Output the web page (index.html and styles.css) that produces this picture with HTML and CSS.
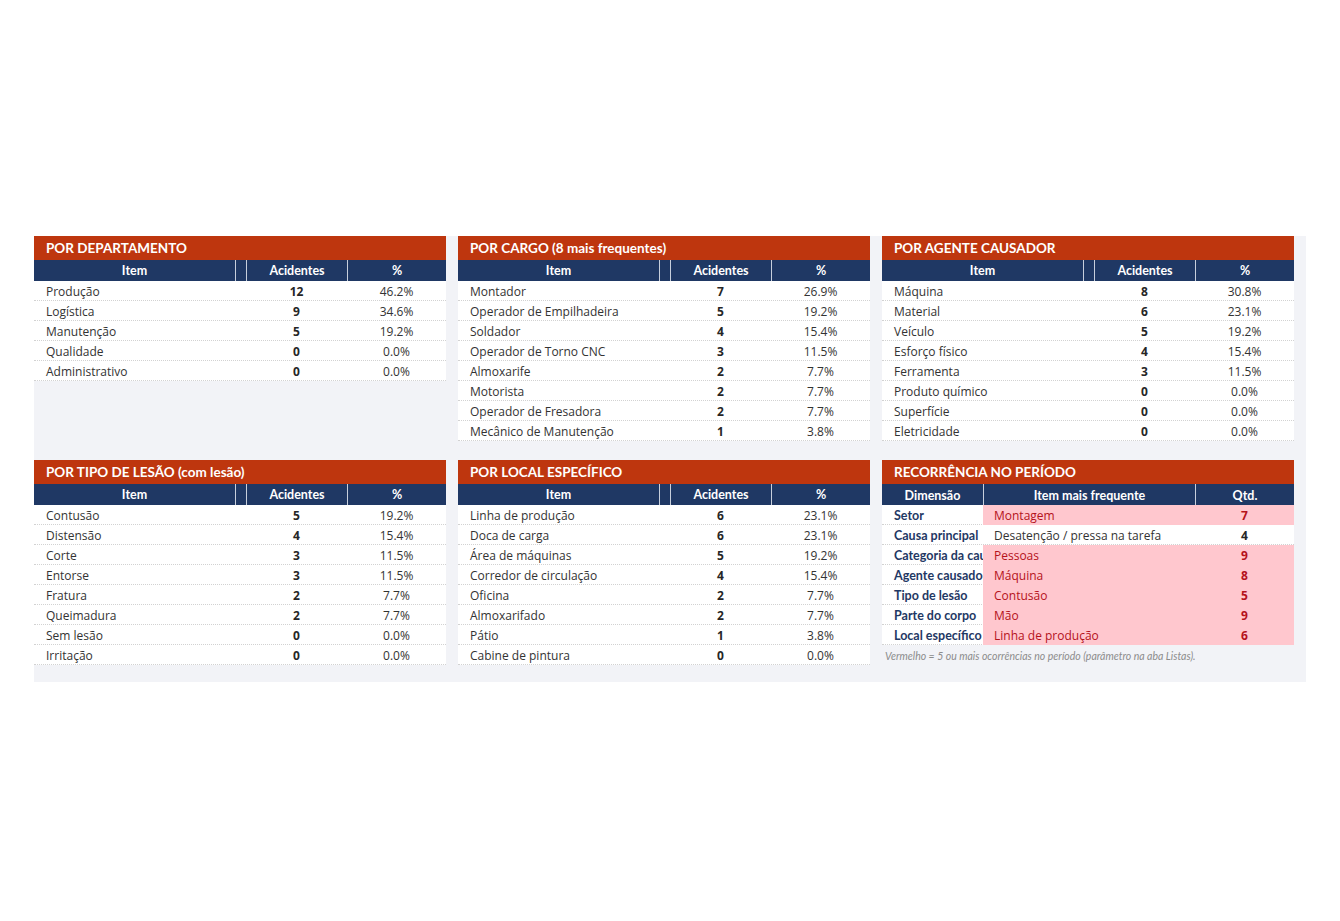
FILE: index.html
```html
<!DOCTYPE html>
<html lang="pt">
<head>
<meta charset="utf-8">
<title>Acidentes</title>
<link rel="stylesheet" href="styles.css">
</head>
<body>
<div class="sheet">
  <section class="panel">
    <div class="title">POR DEPARTAMENTO</div>
    <div class="row head"><span>Item</span><span></span><span>Acidentes</span><span>%</span></div>
    <div class="row"><span class="item">Produção</span><span></span><span class="num">12</span><span class="pct">46.2%</span></div>
    <div class="row"><span class="item">Logística</span><span></span><span class="num">9</span><span class="pct">34.6%</span></div>
    <div class="row"><span class="item">Manutenção</span><span></span><span class="num">5</span><span class="pct">19.2%</span></div>
    <div class="row"><span class="item">Qualidade</span><span></span><span class="num">0</span><span class="pct">0.0%</span></div>
    <div class="row"><span class="item">Administrativo</span><span></span><span class="num">0</span><span class="pct">0.0%</span></div>
  </section>

  <section class="panel">
    <div class="title">POR CARGO (8 mais frequentes)</div>
    <div class="row head"><span>Item</span><span></span><span>Acidentes</span><span>%</span></div>
    <div class="row"><span class="item">Montador</span><span></span><span class="num">7</span><span class="pct">26.9%</span></div>
    <div class="row"><span class="item">Operador de Empilhadeira</span><span></span><span class="num">5</span><span class="pct">19.2%</span></div>
    <div class="row"><span class="item">Soldador</span><span></span><span class="num">4</span><span class="pct">15.4%</span></div>
    <div class="row"><span class="item">Operador de Torno CNC</span><span></span><span class="num">3</span><span class="pct">11.5%</span></div>
    <div class="row"><span class="item">Almoxarife</span><span></span><span class="num">2</span><span class="pct">7.7%</span></div>
    <div class="row"><span class="item">Motorista</span><span></span><span class="num">2</span><span class="pct">7.7%</span></div>
    <div class="row"><span class="item">Operador de Fresadora</span><span></span><span class="num">2</span><span class="pct">7.7%</span></div>
    <div class="row"><span class="item">Mecânico de Manutenção</span><span></span><span class="num">1</span><span class="pct">3.8%</span></div>
  </section>

  <section class="panel">
    <div class="title">POR AGENTE CAUSADOR</div>
    <div class="row head"><span>Item</span><span></span><span>Acidentes</span><span>%</span></div>
    <div class="row"><span class="item">Máquina</span><span></span><span class="num">8</span><span class="pct">30.8%</span></div>
    <div class="row"><span class="item">Material</span><span></span><span class="num">6</span><span class="pct">23.1%</span></div>
    <div class="row"><span class="item">Veículo</span><span></span><span class="num">5</span><span class="pct">19.2%</span></div>
    <div class="row"><span class="item">Esforço físico</span><span></span><span class="num">4</span><span class="pct">15.4%</span></div>
    <div class="row"><span class="item">Ferramenta</span><span></span><span class="num">3</span><span class="pct">11.5%</span></div>
    <div class="row"><span class="item">Produto químico</span><span></span><span class="num">0</span><span class="pct">0.0%</span></div>
    <div class="row"><span class="item">Superfície</span><span></span><span class="num">0</span><span class="pct">0.0%</span></div>
    <div class="row"><span class="item">Eletricidade</span><span></span><span class="num">0</span><span class="pct">0.0%</span></div>
  </section>

  <section class="panel">
    <div class="title">POR TIPO DE LESÃO (com lesão)</div>
    <div class="row head"><span>Item</span><span></span><span>Acidentes</span><span>%</span></div>
    <div class="row"><span class="item">Contusão</span><span></span><span class="num">5</span><span class="pct">19.2%</span></div>
    <div class="row"><span class="item">Distensão</span><span></span><span class="num">4</span><span class="pct">15.4%</span></div>
    <div class="row"><span class="item">Corte</span><span></span><span class="num">3</span><span class="pct">11.5%</span></div>
    <div class="row"><span class="item">Entorse</span><span></span><span class="num">3</span><span class="pct">11.5%</span></div>
    <div class="row"><span class="item">Fratura</span><span></span><span class="num">2</span><span class="pct">7.7%</span></div>
    <div class="row"><span class="item">Queimadura</span><span></span><span class="num">2</span><span class="pct">7.7%</span></div>
    <div class="row"><span class="item">Sem lesão</span><span></span><span class="num">0</span><span class="pct">0.0%</span></div>
    <div class="row"><span class="item">Irritação</span><span></span><span class="num">0</span><span class="pct">0.0%</span></div>
  </section>

  <section class="panel">
    <div class="title">POR LOCAL ESPECÍFICO</div>
    <div class="row head"><span>Item</span><span></span><span>Acidentes</span><span>%</span></div>
    <div class="row"><span class="item">Linha de produção</span><span></span><span class="num">6</span><span class="pct">23.1%</span></div>
    <div class="row"><span class="item">Doca de carga</span><span></span><span class="num">6</span><span class="pct">23.1%</span></div>
    <div class="row"><span class="item">Área de máquinas</span><span></span><span class="num">5</span><span class="pct">19.2%</span></div>
    <div class="row"><span class="item">Corredor de circulação</span><span></span><span class="num">4</span><span class="pct">15.4%</span></div>
    <div class="row"><span class="item">Oficina</span><span></span><span class="num">2</span><span class="pct">7.7%</span></div>
    <div class="row"><span class="item">Almoxarifado</span><span></span><span class="num">2</span><span class="pct">7.7%</span></div>
    <div class="row"><span class="item">Pátio</span><span></span><span class="num">1</span><span class="pct">3.8%</span></div>
    <div class="row"><span class="item">Cabine de pintura</span><span></span><span class="num">0</span><span class="pct">0.0%</span></div>
  </section>

  <section class="panel rec">
    <div class="title">RECORRÊNCIA NO PERÍODO</div>
    <div class="rrow head"><span>Dimensão</span><span>Item mais frequente</span><span>Qtd.</span></div>
    <div class="rrow alert"><span class="dim">Setor</span><span class="val">Montagem</span><span class="qty">7</span></div>
    <div class="rrow"><span class="dim">Causa principal</span><span class="val">Desatenção / pressa na tarefa</span><span class="qty">4</span></div>
    <div class="rrow alert"><span class="dim">Categoria da causa</span><span class="val">Pessoas</span><span class="qty">9</span></div>
    <div class="rrow alert"><span class="dim">Agente causador</span><span class="val">Máquina</span><span class="qty">8</span></div>
    <div class="rrow alert"><span class="dim">Tipo de lesão</span><span class="val">Contusão</span><span class="qty">5</span></div>
    <div class="rrow alert"><span class="dim">Parte do corpo</span><span class="val">Mão</span><span class="qty">9</span></div>
    <div class="rrow alert"><span class="dim">Local específico</span><span class="val">Linha de produção</span><span class="qty">6</span></div>
    <p class="note">Vermelho = 5 ou mais ocorrências no período (parâmetro na aba Listas).</p>
  </section>
</div>
</body>
</html>
```

FILE: styles.css
```css
html, body {
  margin: 0;
  padding: 0;
  background: #ffffff;
}

body {
  font-family: "Open Sans", "DejaVu Sans", sans-serif;
  color: #333333;
}

.sheet {
  margin: 236px 0 0 34px;
  width: 1260px;
  padding: 0 12px 17px 0;
  background: #f2f3f7;
  display: grid;
  grid-template-columns: 412px 412px 412px;
  column-gap: 12px;
  row-gap: 19px;
  align-items: start;
}

.panel {
  display: flex;
  flex-direction: column;
}

.title {
  height: 24px;
  line-height: 24px;
  background: #be360e;
  color: #ffffff;
  font-family: "Lato", "Liberation Sans", sans-serif;
  font-weight: 700;
  font-size: 13.5px;
  padding-left: 12px;
  white-space: nowrap;
}

.row {
  display: grid;
  grid-template-columns: 201px 11px 101px 1fr;
  height: 20px;
  background: #ffffff;
  border-bottom: 1px dotted #d2d2d2;
  box-sizing: border-box;
  font-size: 12px;
  line-height: 19px;
  padding-top: 1px;
}

.row.head,
.rrow.head {
  height: 21px;
  padding-top: 0;
  background: #1f3864;
  color: #ffffff;
  border-bottom: none;
  font-family: "Lato", "Liberation Sans", sans-serif;
  font-weight: 700;
  font-size: 12.5px;
  line-height: 21px;
  text-align: center;
}

.row.head span + span,
.rrow.head span + span {
  border-left: 1px solid #c7cfdc;
}

.item {
  padding-left: 12px;
  white-space: nowrap;
}

.num {
  text-align: center;
  font-weight: 700;
  color: #262626;
}

.pct {
  text-align: center;
}

.rrow {
  display: grid;
  grid-template-columns: 101px 212px 1fr;
  height: 20px;
  background: #ffffff;
  border-bottom: 1px dotted #d2d2d2;
  box-sizing: border-box;
  font-size: 12px;
  line-height: 19px;
}

.rrow > span {
  padding-top: 1px;
}

.rrow.alert .val,
.rrow.alert .qty {
  background: #ffc7ce;
  color: #b5121b;
}

.dim {
  font-family: "Lato", "Liberation Sans", sans-serif;
  font-weight: 700;
  font-size: 12.5px;
  color: #1f3864;
  padding-left: 12px;
  white-space: nowrap;
  overflow: hidden;
}

.val {
  padding-left: 11px;
  white-space: nowrap;
}

.qty {
  text-align: center;
  font-weight: 700;
  color: #262626;
}

.note {
  margin: 4px 0 0 3px;
  font-family: "Lato", "Liberation Sans", sans-serif;
  font-style: italic;
  font-size: 10.5px;
  line-height: 14px;
  color: #8c8c8c;
}
```
